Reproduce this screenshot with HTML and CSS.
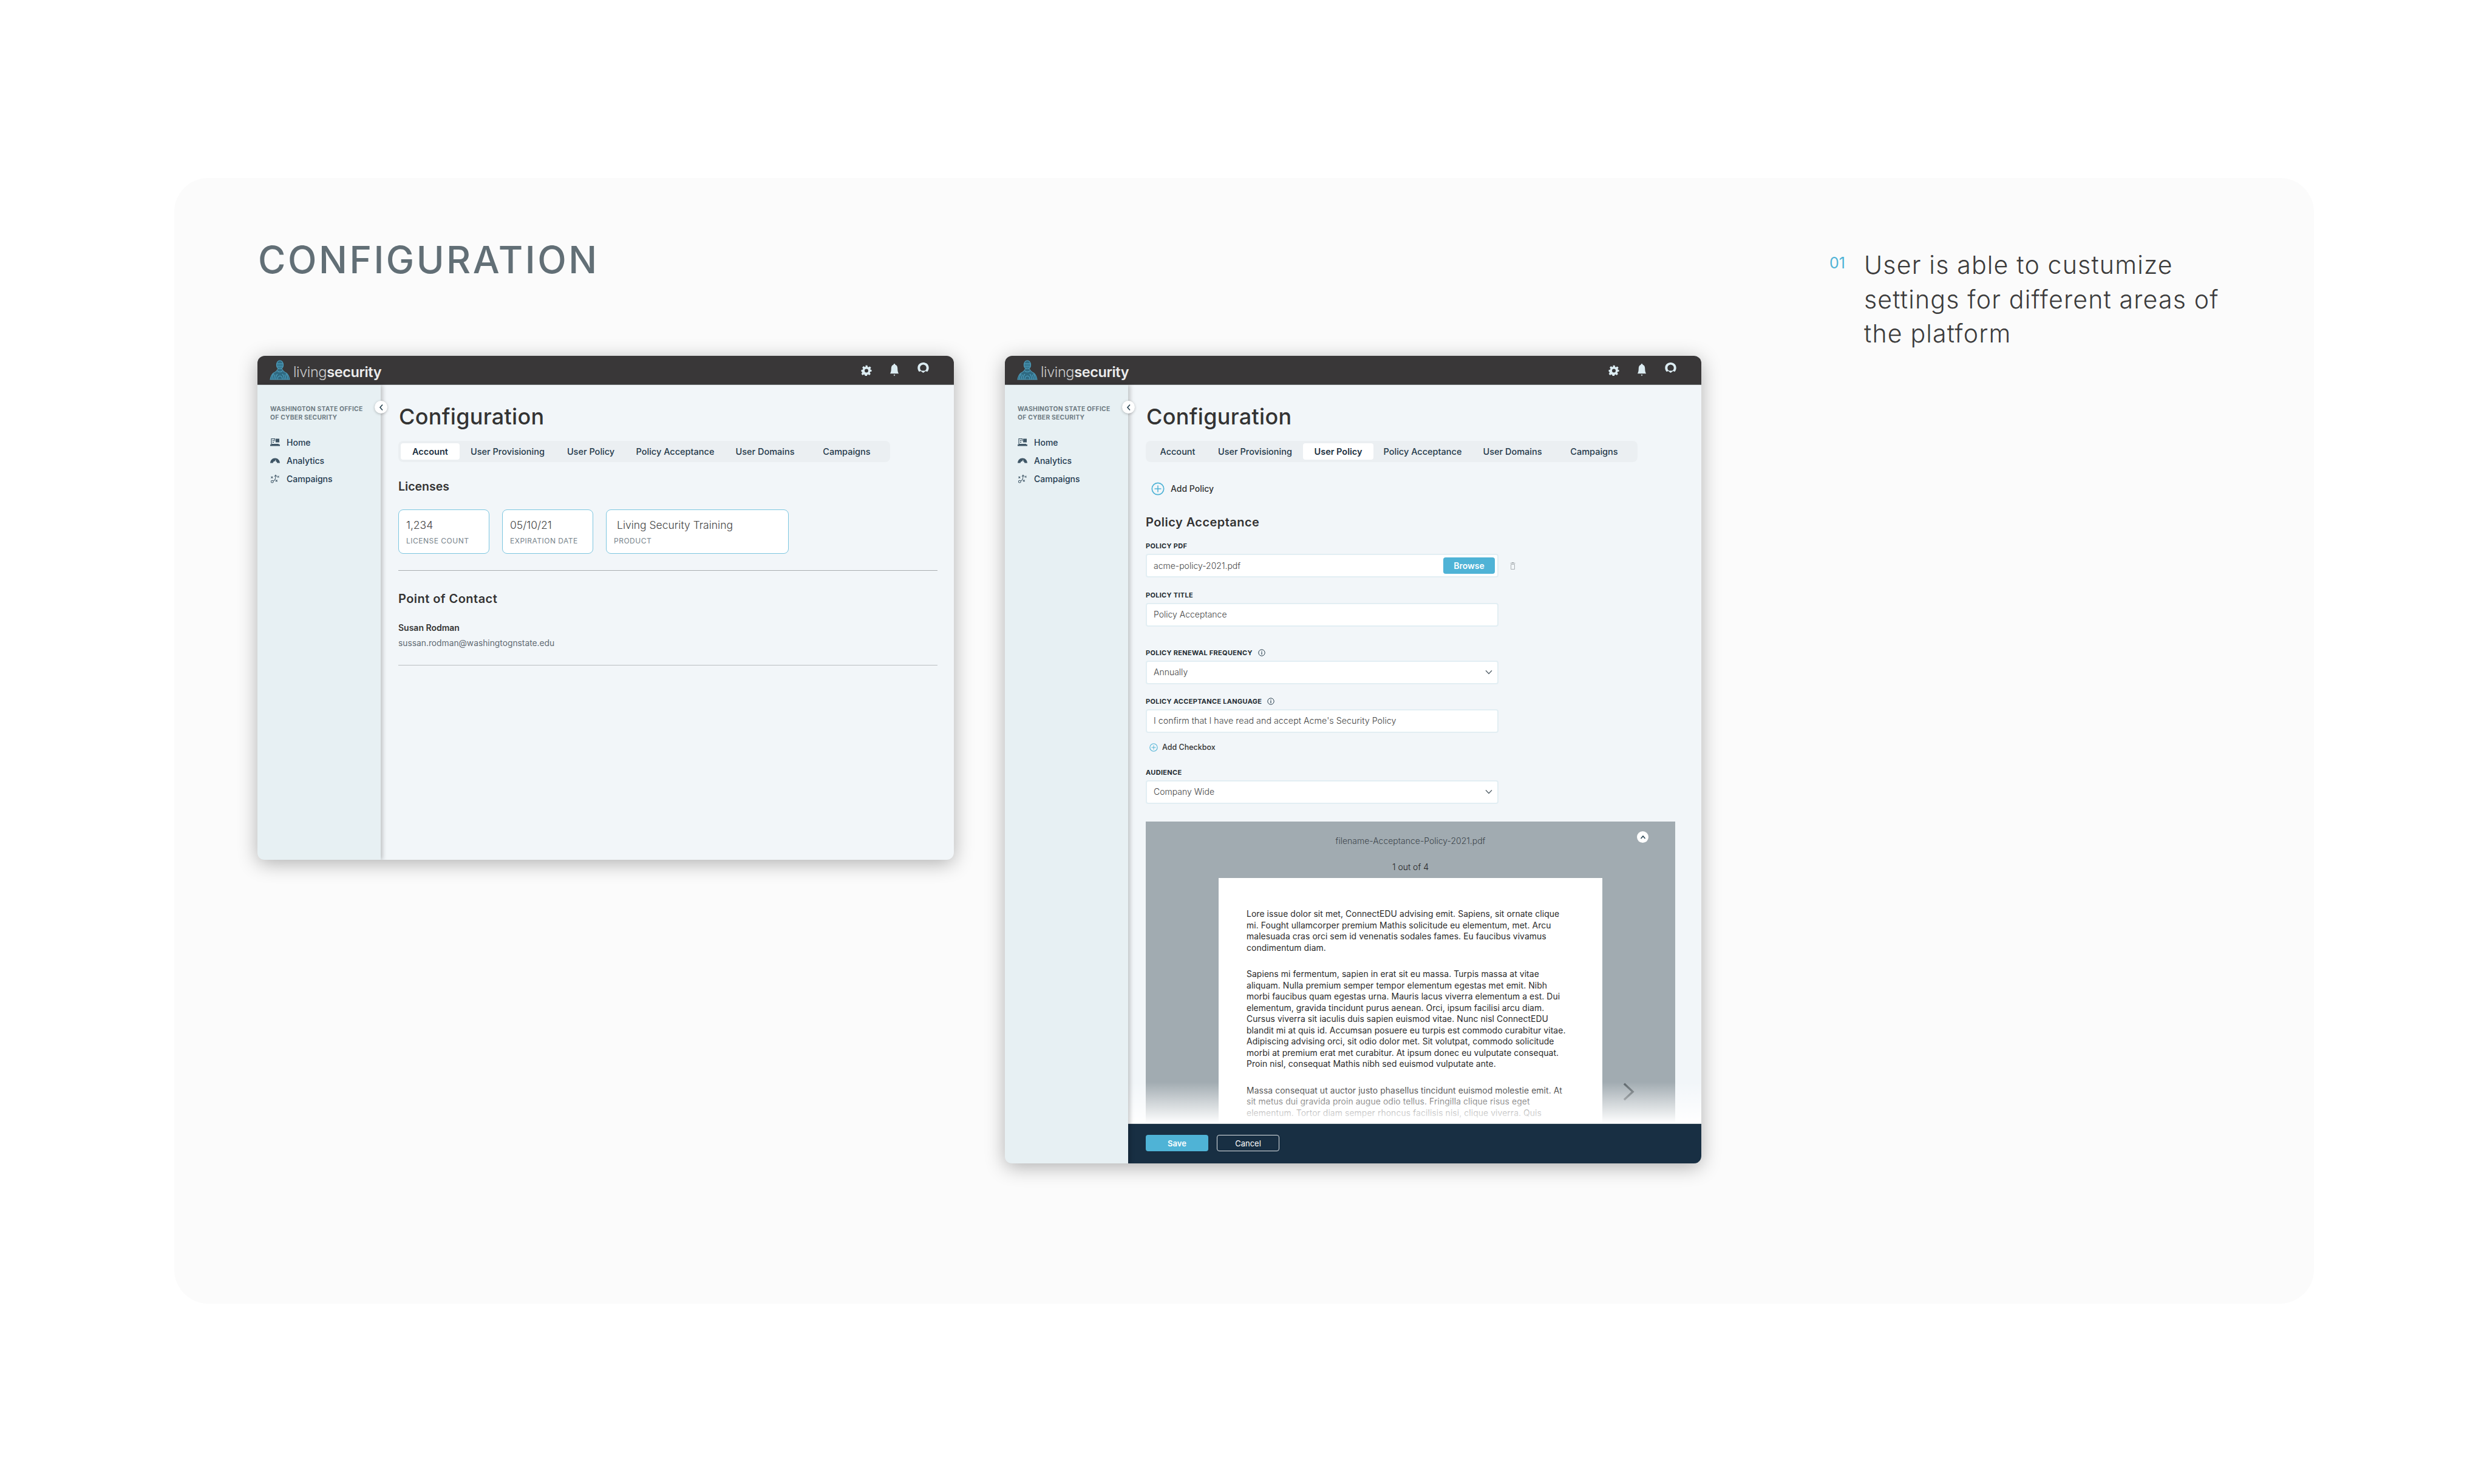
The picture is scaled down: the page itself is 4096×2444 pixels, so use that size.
FILE: index.html
```html
<!DOCTYPE html>
<html>
<head>
    <link rel="stylesheet" href="styles.css">
</head>
<body>
    <svg class="defs" width="0" height="0">
        <symbol id="logo-man" viewBox="0 0 34 33">
            <g fill="none" stroke="#4f9fbe" stroke-width="1.1">
                <ellipse cx="17" cy="8" rx="5.6" ry="7.2" fill="#2f6a82"/>
                <path d="M12 5.5h10M11.6 8h10.8M12 10.5h10M13 13h8"/>
                <path d="M13 15c0 3-3 4-6 6-3 2-5 6-6 11h32c-1-5-3-9-6-11-3-2-6-3-6-6" fill="#2f6a82"/>
                <path d="M4 32c0-4 1-7 3-9M7 32c0-4 1-6 2-8M10 32c0-5 1-7 3-9M13 32c0-4 1-5 4-6 3 1 4 2 4 6M24 32c0-5-1-7-3-9M27 32c0-4-1-6-2-8M30 32c0-4-1-7-3-9M13 18c2 2 6 2 8 0"/>
            </g>
        </symbol>
        <symbol id="gear" viewBox="0 0 24 24">
            <path fill="#dcecf2" fill-rule="evenodd" d="M10 1h4l.7 3.2 1.9.8 2.8-1.8 2.8 2.8-1.8 2.8.8 1.9L23.4 11v3.4l-3.2.7-.8 1.9 1.8 2.8-2.8 2.8-2.8-1.8-1.9.8-.7 3.2h-4l-.7-3.2-1.9-.8-2.8 1.8-2.8-2.8 1.8-2.8-.8-1.9L.6 14.400V11l3.200-.7.8-1.900-1.800-2.800 2.800-2.800 2.800 1.800 1.900-.8zM12 8.500a4 4 0 1 0 0 8 4 4 0 0 0 0-8z"/>
        </symbol>
        <symbol id="bell" viewBox="0 0 16 24">
            <path fill="#dcecf2" d="M8 0c1 0 1.500.8 1.600 1.800C12.600 2.800 14 5.500 14 9c0 4 .6 7 2 9.500H0C1.400 16 2 13 2 9c0-3.500 1.400-6.200 4.400-7.200C6.500.8 7 0 8 0zM6.500 20.500h3L8 23.500z"/>
        </symbol>
        <symbol id="agent" viewBox="0 0 24 24">
            <path fill="#dcecf2" fill-rule="evenodd" d="M12 1c6 0 10.500 4.200 10.500 10 0 3-1 5.500-3 7.500l-3-1.500c-1 1-2.500 2-4.500 3.500-2-1.500-3.500-2.500-4.500-3.500l-3 1.500c-2-2-3-4.500-3-7.500C1.500 5.200 6 1 12 1zm0 4a6 6 0 0 0-6 6c0 2.500 1.200 4.500 3 5.500h6c1.800-1 3-3 3-5.500a6 6 0 0 0-6-6z"/>
        </symbol>
        <symbol id="nav-home" viewBox="0 0 16 14">
            <path fill="none" stroke="#3f5666" stroke-width="1.200" d="M2 10V1h5.500v4M2 10h12"/>
            <path fill="#3f5666" d="M9 1h6v6H9zM4 3h2v1.500H4zM4 6h2v1.500H4zM0 10.500h16V13H0z"/>
        </symbol>
        <symbol id="nav-analytics" viewBox="0 0 16 10">
            <path fill="#3f5666" d="M0 9C.4 4 3.600 1 8 1s7.600 3 8 8h-4.500C11 7 9.800 6 8 6S5 7 4.500 9z"/>
            <path stroke="#e7f0f3" stroke-width="1.200" d="M8 9l1-5"/>
        </symbol>
        <symbol id="nav-campaigns" viewBox="0 0 16 16">
            <g fill="none" stroke="#3f5666" stroke-width="1.100">
                <circle cx="3" cy="13" r="2"/>
                <path d="M5 12c3-1 4-4 4-9M7 4l2-2.500L11 4M12 3l3 3M15 3l-3 3M1 4l3 3M4 4L1 7M9 10l3 3M12 10l-3 3"/>
            </g>
        </symbol>
        <symbol id="add" viewBox="0 0 22 22">
            <circle cx="11" cy="11" r="9.700" fill="none" stroke="#4fb3d6" stroke-width="1.700"/>
            <path d="M11 5.500v11M5.500 11h11" stroke="#4fb3d6" stroke-width="1.500"/>
        </symbol>
        <symbol id="info" viewBox="0 0 12 12">
            <circle cx="6" cy="6" r="5.200" fill="none" stroke="#2c4150" stroke-width="1"/>
            <path d="M6 5v4M6 3v1.200" stroke="#2c4150" stroke-width="1.200"/>
        </symbol>
        <symbol id="chevron" viewBox="0 0 12 8">
            <path d="M1 1.200l5 5.300 5-5.300" fill="none" stroke="#54616a" stroke-width="1.300"/>
        </symbol>
    </svg>

    <main class="panel">
        <div class="panel-left">
            <h1 class="panel-title">CONFIGURATION</h1>
            <div class="shots">

                <section class="app app-short">
                    <header class="topbar">
                        <div class="logo">
                            <svg class="logo-man"><use href="#logo-man"/></svg>
                            <span class="logo-text">living<b>security</b></span>
                        </div>
                        <div class="top-icons">
                            <svg class="ic-gear"><use href="#gear"/></svg>
                            <svg class="ic-bell"><use href="#bell"/></svg>
                            <svg class="ic-agent"><use href="#agent"/></svg>
                        </div>
                    </header>
                    <div class="app-body">
                        <aside class="sidebar">
                            <button class="collapse"><svg viewBox="0 0 8 12"><path d="M6 1.500L2 6l4 4.500" fill="none" stroke="#25404f" stroke-width="1.600"/></svg></button>
                            <div class="org">WASHINGTON STATE OFFICE<br>OF CYBER SECURITY</div>
                            <nav class="nav">
                                <a class="nav-item"><svg class="nav-ic"><use href="#nav-home"/></svg>Home</a>
                                <a class="nav-item"><svg class="nav-ic"><use href="#nav-analytics"/></svg>Analytics</a>
                                <a class="nav-item"><svg class="nav-ic"><use href="#nav-campaigns"/></svg>Campaigns</a>
                            </nav>
                        </aside>
                        <div class="content">
                            <h2 class="page-title">Configuration</h2>
                            <div class="tabs">
                                <span class="tab active">Account</span>
                                <span class="tab">User Provisioning</span>
                                <span class="tab">User Policy</span>
                                <span class="tab">Policy Acceptance</span>
                                <span class="tab">User Domains</span>
                                <span class="tab">Campaigns</span>
                            </div>
                            <h3 class="section-head licenses-head">Licenses</h3>
                            <div class="cards">
                                <div class="card card-sm">
                                    <div class="card-value">1,234</div>
                                    <div class="card-label">LICENSE COUNT</div>
                                </div>
                                <div class="card card-sm">
                                    <div class="card-value">05/10/21</div>
                                    <div class="card-label">EXPIRATION DATE</div>
                                </div>
                                <div class="card card-lg">
                                    <div class="card-value card-value-in">Living Security Training</div>
                                    <div class="card-label">PRODUCT</div>
                                </div>
                            </div>
                            <hr class="rule rule-first">
                            <h3 class="section-head contact-head">Point of Contact</h3>
                            <div class="contact-name">Susan Rodman</div>
                            <div class="contact-mail">sussan.rodman@washingtognstate.edu</div>
                            <hr class="rule rule-second">
                        </div>
                    </div>
                </section>

                <section class="app app-tall">
                    <header class="topbar">
                        <div class="logo">
                            <svg class="logo-man"><use href="#logo-man"/></svg>
                            <span class="logo-text">living<b>security</b></span>
                        </div>
                        <div class="top-icons">
                            <svg class="ic-gear"><use href="#gear"/></svg>
                            <svg class="ic-bell"><use href="#bell"/></svg>
                            <svg class="ic-agent"><use href="#agent"/></svg>
                        </div>
                    </header>
                    <div class="app-body">
                        <aside class="sidebar">
                            <button class="collapse"><svg viewBox="0 0 8 12"><path d="M6 1.500L2 6l4 4.500" fill="none" stroke="#25404f" stroke-width="1.600"/></svg></button>
                            <div class="org">WASHINGTON STATE OFFICE<br>OF CYBER SECURITY</div>
                            <nav class="nav">
                                <a class="nav-item"><svg class="nav-ic"><use href="#nav-home"/></svg>Home</a>
                                <a class="nav-item"><svg class="nav-ic"><use href="#nav-analytics"/></svg>Analytics</a>
                                <a class="nav-item"><svg class="nav-ic"><use href="#nav-campaigns"/></svg>Campaigns</a>
                            </nav>
                        </aside>
                        <div class="main-col">
                            <div class="content content-form">
                                <h2 class="page-title">Configuration</h2>
                                <div class="tabs">
                                    <span class="tab">Account</span>
                                    <span class="tab">User Provisioning</span>
                                    <span class="tab active">User Policy</span>
                                    <span class="tab">Policy Acceptance</span>
                                    <span class="tab">User Domains</span>
                                    <span class="tab">Campaigns</span>
                                </div>
                                <div class="add-row add-policy">
                                    <svg class="add-ic"><use href="#add"/></svg>Add Policy
                                </div>
                                <h3 class="section-head policy-head">Policy Acceptance</h3>

                                <label class="field-label label-pdf">POLICY PDF</label>
                                <div class="file-row">
                                    <div class="input input-file">
                                        <span>acme-policy-2021.pdf</span>
                                        <button class="browse">Browse</button>
                                    </div>
                                    <svg class="trash" viewBox="0 0 9 12"><path d="M.5 1.500h8M3 1.500V.5h3v1M1.500 3.500h6V11.500h-6z" fill="none" stroke="#a9afb3" stroke-width="1"/></svg>
                                </div>

                                <label class="field-label label-title">POLICY TITLE</label>
                                <div class="input">Policy Acceptance</div>

                                <label class="field-label label-renewal">POLICY RENEWAL FREQUENCY <svg class="info"><use href="#info"/></svg></label>
                                <div class="input">Annually<svg class="select-ic"><use href="#chevron"/></svg></div>

                                <label class="field-label label-language">POLICY ACCEPTANCE LANGUAGE <svg class="info"><use href="#info"/></svg></label>
                                <div class="input input-long">I confirm that I have read and accept Acme's Security Policy</div>

                                <div class="add-row add-checkbox">
                                    <svg class="add-ic-sm"><use href="#add"/></svg>Add Checkbox
                                </div>

                                <label class="field-label label-audience">AUDIENCE</label>
                                <div class="input">Company Wide<svg class="select-ic"><use href="#chevron"/></svg></div>

                                <div class="preview">
                                    <div class="preview-name">filename-Acceptance-Policy-2021.pdf</div>
                                    <div class="preview-count">1 out of 4</div>
                                    <button class="preview-close"><svg viewBox="0 0 10 8"><path d="M1.500 6L5 2l3.500 4" fill="none" stroke="#25404f" stroke-width="1.500"/></svg></button>
                                    <div class="paper">
                                        <p>Lore issue dolor sit met, ConnectEDU advising emit. Sapiens, sit ornate clique<br>mi. Fought ullamcorper premium Mathis solicitude eu elementum, met. Arcu<br>malesuada cras orci sem id venenatis sodales fames. Eu faucibus vivamus<br>condimentum diam.</p>
                                        <p>Sapiens mi fermentum, sapien in erat sit eu massa. Turpis massa at vitae<br>aliquam. Nulla premium semper tempor elementum egestas met emit. Nibh<br>morbi faucibus quam egestas urna. Mauris lacus viverra elementum a est. Dui<br>elementum, gravida tincidunt purus aenean. Orci, ipsum facilisi arcu diam.<br>Cursus viverra sit iaculis duis sapien euismod vitae. Nunc nisl ConnectEDU<br>blandit mi at quis id. Accumsan posuere eu turpis est commodo curabitur vitae.<br>Adipiscing advising orci, sit odio dolor met. Sit volutpat, commodo solicitude<br>morbi at premium erat met curabitur. At ipsum donec eu vulputate consequat.<br>Proin nisl, consequat Mathis nibh sed euismod vulputate ante.</p>
                                        <p>Massa consequat ut auctor justo phasellus tincidunt euismod molestie emit. At<br>sit metus dui gravida proin augue odio tellus. Fringilla clique risus eget<br>elementum. Tortor diam semper rhoncus facilisis nisi, clique viverra. Quis</p>
                                    </div>
                                    <svg class="preview-next" viewBox="0 0 20 32"><path d="M2 2l15 14L2 30" fill="none" stroke="#5a6368" stroke-width="3.500"/></svg>
                                </div>
                            </div>
                            <div class="fade"></div>
                            <footer class="savebar">
                                <button class="btn-save">Save</button>
                                <button class="btn-cancel">Cancel</button>
                            </footer>
                        </div>
                    </div>
                </section>

            </div>
        </div>

        <aside class="note">
            <span class="note-num">01</span>
            <p class="note-text">User is able to custumize<br>settings for different areas of<br>the platform</p>
        </aside>
    </main>
</body>
</html>
```

FILE: styles.css
```css
html, body {
    margin: 0;
    background: #fff;
}
body {
    padding: 293px 285px 297px 287px;
    font-family: Inter, "Liberation Sans", sans-serif;
    color: #333;
}
.defs {
    position: absolute;
}
.panel {
    height: 1854px;
    box-sizing: border-box;
    background: #fbfbfb;
    border-radius: 56px;
    padding: 0 0 0 137px;
    display: flex;
}
.panel-left {
    width: 2589px;
}
.panel-title {
    margin: 97px 0 0 1px;
    font-size: 62px;
    line-height: 75px;
    font-weight: 500;
    color: #626f76;
    letter-spacing: 3.5px;
}
.shots {
    margin-top: 121px;
    display: flex;
    align-items: flex-start;
    gap: 84px;
}

/* note on the right */
.note {
    display: flex;
    padding-top: 115px;
}
.note-num {
    width: 57px;
    margin-top: 10px;
    font-size: 25px;
    line-height: 30px;
    font-weight: 400;
    color: #4fb3d6;
}
.note-text {
    margin: 0;
    font-size: 41px;
    line-height: 56.5px;
    font-weight: 300;
    color: #3c3c3c;
    letter-spacing: 1.2px;
    white-space: nowrap;
}

/* app window */
.app {
    width: 1147px;
    border-radius: 12px;
    overflow: hidden;
    background: #f2f6f9;
    box-shadow: 0 6px 32px rgba(0,0,0,0.3);
    display: flex;
    flex-direction: column;
}
.app-short {
    height: 830px;
}
.app-tall {
    height: 1330px;
}
.topbar {
    height: 48px;
    flex: none;
    box-sizing: border-box;
    background: #393738;
    border-bottom: 1px solid #6b6e70;
    display: flex;
    align-items: center;
    justify-content: space-between;
    padding: 0 40px 0 20px;
}
.logo {
    display: flex;
    align-items: center;
    gap: 5px;
}
.logo-man {
    width: 34px;
    height: 33px;
}
.logo-text {
    font-size: 23.5px;
    font-weight: 300;
    color: #c8c9ca;
    letter-spacing: -0.4px;
    margin-top: 6px;
}
.logo-text b {
    font-weight: 600;
    color: #ececec;
}
.top-icons {
    display: flex;
    align-items: center;
    gap: 30px;
}
.ic-gear {
    width: 18px;
    height: 18px;
}
.ic-bell {
    width: 14px;
    height: 21px;
}
.ic-agent {
    width: 21px;
    height: 21px;
    margin-top: -6px;
}
.app-body {
    flex: 1;
    display: flex;
    min-height: 0;
}

/* sidebar */
.sidebar {
    position: relative;
    width: 203px;
    flex: none;
    box-sizing: border-box;
    background: #e7f0f3;
    box-shadow: 3px 0 7px rgba(0,0,0,0.22);
    padding: 32px 0 0 21px;
    z-index: 2;
}
.collapse {
    position: absolute;
    top: 26px;
    right: -11px;
    width: 21px;
    height: 21px;
    padding: 0;
    border: none;
    border-radius: 50%;
    background: #fff;
    box-shadow: 0 1px 4px rgba(0,0,0,0.25);
    display: flex;
    align-items: center;
    justify-content: center;
}
.collapse svg {
    width: 8px;
    height: 12px;
}
.org {
    font-size: 10.3px;
    line-height: 14px;
    font-weight: 700;
    color: #6f7c84;
    letter-spacing: 0.25px;
    white-space: nowrap;
}
.nav {
    margin-top: 19px;
    display: flex;
    flex-direction: column;
}
.nav-item {
    height: 30px;
    display: flex;
    align-items: center;
    font-size: 14px;
    font-weight: 500;
    color: #1f3a4f;
}
.nav-ic {
    width: 16px;
    height: 15px;
    margin-right: 11px;
    flex: none;
}

/* content */
.content {
    flex: 1;
    padding: 31px 27px 0 29px;
    min-width: 0;
}
.main-col {
    position: relative;
    flex: 1;
    min-width: 0;
    display: flex;
    flex-direction: column;
}
.content-form {
    flex: 1;
    overflow: hidden;
}
.page-title {
    margin: 0 0 0 1px;
    font-size: 36px;
    line-height: 42px;
    font-weight: 500;
    color: #333;
    letter-spacing: 0.3px;
}
.tabs {
    margin-top: 19px;
    width: 810px;
    height: 35px;
    box-sizing: border-box;
    padding: 4px;
    background: #ebeff2;
    border-radius: 8px;
    display: grid;
    grid-template-columns: 97px 158px 116px 162px 134px 135px;
}
.tab {
    border-radius: 4px;
    font-size: 14.5px;
    font-weight: 500;
    color: #24394a;
    display: flex;
    align-items: center;
    justify-content: center;
    white-space: nowrap;
}
.tab.active {
    background: #fff;
    font-weight: 600;
    color: #1b3040;
}
.section-head {
    margin: 0;
    font-size: 20px;
    line-height: 24px;
    font-weight: 600;
    color: #333;
    letter-spacing: 0.45px;
}
.licenses-head {
    margin-top: 28px;
    font-size: 19.5px;
    letter-spacing: 0;
}
.cards {
    margin-top: 26px;
    display: flex;
    gap: 21px;
}
.card {
    height: 73px;
    box-sizing: border-box;
    background: #fff;
    border: 1px solid #7cc6e0;
    border-radius: 8px;
    padding: 14px 12px 0;
}
.card-sm {
    width: 150px;
}
.card-lg {
    width: 301px;
}
.card-value {
    font-size: 17.5px;
    line-height: 22px;
    font-weight: 300;
    color: #444;
}
.card-value-in {
    padding-left: 5px;
}
.card-label {
    margin-top: 7px;
    font-size: 12px;
    line-height: 15px;
    color: #77838b;
    letter-spacing: 0.5px;
    white-space: nowrap;
}
.rule {
    margin: 0;
    border: none;
    border-top: 1px solid #a8adb0;
}
.rule-first {
    margin-top: 27px;
}
.contact-head {
    margin-top: 34px;
}
.contact-name {
    margin-top: 27px;
    font-size: 14px;
    line-height: 18px;
    font-weight: 600;
    color: #333;
}
.contact-mail {
    margin-top: 7px;
    font-size: 13.8px;
    line-height: 18px;
    font-weight: 400;
    color: #5f6a72;
}
.rule-second {
    margin-top: 27px;
    border-top-color: #b9bec1;
}

/* policy form */
.add-row {
    display: flex;
    align-items: center;
    color: #333;
}
.add-policy {
    margin: 33px 0 0 9px;
    font-size: 14px;
    line-height: 22px;
    font-weight: 500;
}
.add-ic {
    width: 22px;
    height: 22px;
    margin-right: 10px;
}
.policy-head {
    margin-top: 32px;
}
.field-label {
    display: flex;
    align-items: center;
    font-size: 11px;
    line-height: 14px;
    font-weight: 700;
    color: #1e2a30;
    letter-spacing: 0.3px;
    white-space: nowrap;
}
.label-pdf {
    margin-top: 20px;
}
.label-title {
    margin-top: 22px;
}
.label-renewal {
    margin-top: 36px;
}
.label-language {
    margin-top: 21px;
}
.label-audience {
    margin-top: 26px;
}
.info {
    width: 12px;
    height: 12px;
    margin: 0 0 0 9px;
}
.input {
    margin-top: 6px;
    width: 581px;
    height: 39px;
    box-sizing: border-box;
    background: #fff;
    border: 2px solid #e2eef3;
    border-radius: 4px;
    padding: 0 11px 2px;
    display: flex;
    align-items: center;
    justify-content: space-between;
    font-size: 14px;
    font-weight: 300;
    color: #444;
}
.input-long {
    font-size: 14.3px;
}
.file-row {
    display: flex;
    align-items: center;
}
.input-file {
    padding: 0 4px 0 11px;
}
.browse {
    width: 85px;
    height: 27px;
    padding: 0;
    border: none;
    border-radius: 4px;
    background: #4fb3d6;
    color: #fff;
    font-family: inherit;
    font-size: 14px;
    font-weight: 600;
}
.trash {
    width: 9px;
    height: 12px;
    margin: 7px 0 0 19px;
}
.select-ic {
    width: 12px;
    height: 8px;
    margin-right: -3px;
}
.add-checkbox {
    margin: 16px 0 0 6px;
    font-size: 12.5px;
    line-height: 16px;
    font-weight: 500;
}
.add-ic-sm {
    width: 14px;
    height: 14px;
    margin-right: 7px;
}

/* pdf preview */
.preview {
    position: relative;
    margin-top: 29px;
    width: 872px;
    background: #a1abb1;
    padding-top: 22px;
    text-align: center;
}
.preview-name {
    font-size: 14px;
    line-height: 20px;
    font-weight: 300;
    color: #3c454b;
}
.preview-count {
    margin-top: 23px;
    font-size: 14px;
    line-height: 20px;
    font-weight: 300;
    color: #222;
}
.preview-close {
    position: absolute;
    top: 16px;
    right: 44px;
    width: 19px;
    height: 19px;
    padding: 0;
    border: none;
    border-radius: 50%;
    background: #fff;
    display: flex;
    align-items: center;
    justify-content: center;
}
.preview-close svg {
    width: 10px;
    height: 8px;
}
.preview-next {
    position: absolute;
    top: 429px;
    right: 67px;
    width: 19px;
    height: 32px;
}
.paper {
    margin: 8px 0 0 120px;
    width: 632px;
    height: 440px;
    box-sizing: border-box;
    background: #fff;
    padding: 50px 0 0 46px;
    text-align: left;
    font-size: 13.9px;
    line-height: 18.5px;
    font-weight: 400;
    color: #2a2a2a;
    letter-spacing: 0.08px;
    white-space: nowrap;
}
.paper p {
    margin: 0 0 25px;
}
.fade {
    position: absolute;
    left: 0;
    right: 0;
    bottom: 66px;
    height: 68px;
    background: linear-gradient(to bottom, rgba(255,255,255,0), #fff);
    pointer-events: none;
}
.savebar {
    position: relative;
    height: 66px;
    flex: none;
    box-sizing: border-box;
    background: #182f43;
    border-top: 1px solid #d8dde0;
    padding: 18px 0 0 29px;
    display: flex;
    align-items: flex-start;
    gap: 14px;
}
.btn-save, .btn-cancel {
    width: 103px;
    height: 27px;
    padding: 0;
    border-radius: 4px;
    font-family: inherit;
    font-size: 13px;
    color: #fff;
}
.btn-save {
    border: none;
    background: #4fb3d6;
    font-weight: 600;
}
.btn-cancel {
    border: 1px solid #dfe3e6;
    background: transparent;
    font-weight: 400;
}
```
